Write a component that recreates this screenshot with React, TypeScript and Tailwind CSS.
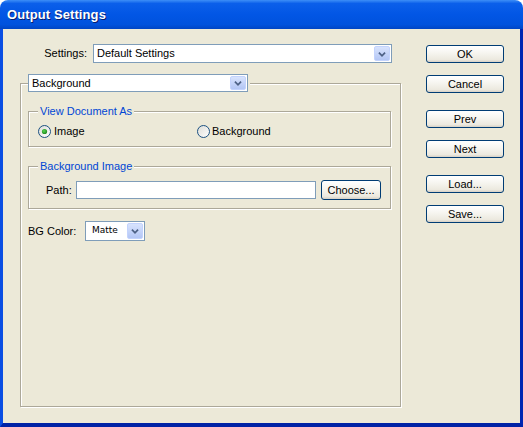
import React from "react";

const font = { fontFamily: '"Liberation Sans", Arial, sans-serif' };

function Chevron() {
  return (
    <svg width="16" height="16" viewBox="0 0 16 16">
      <path d="M4.5 6.5 L8 10 L11.5 6.5" fill="none" stroke="#4d6185" strokeWidth="2" />
    </svg>
  );
}

function Select({ value, width, height, small }: { value: string; width: string; height: string; small?: boolean }) {
  return (
    <div className={`shrink-0 flex items-stretch border border-[#7f9db9] bg-white ${width} ${height}`}>
      <div
        className={`flex-1 min-w-0 flex items-center text-black ${small ? "text-[9px] pl-[6px]" : "text-[11px] pl-[3px]"}`}
        style={small ? { fontFamily: '"DejaVu Sans", sans-serif' } : undefined}
      >
        {value}
      </div>
      <div className="shrink-0 m-[1px] ml-0 w-[16px] flex items-center justify-center rounded-[2px] border border-[#c3d3fd] bg-[linear-gradient(180deg,#d8e3fd,#b3c6f5)]">
        <Chevron />
      </div>
    </div>
  );
}

function Button({ label, className = "" }: { label: string; className?: string }) {
  return (
    <button
      className={`shrink-0 flex items-center justify-center rounded-[3px] border border-[#003c74] bg-[linear-gradient(180deg,#ffffff_0%,#f7f6f1_40%,#ece9df_85%,#d6d0c5_100%)] text-[11px] font-normal text-black ${className}`}
    >
      {label}
    </button>
  );
}

function Radio({ checked }: { checked?: boolean }) {
  return (
    <svg width="13" height="13" viewBox="0 0 13 13" className="shrink-0">
      <defs>
        <linearGradient id="rg" x1="0" y1="0" x2="1" y2="1">
          <stop offset="0" stopColor="#dcdcd6" />
          <stop offset="1" stopColor="#ffffff" />
        </linearGradient>
        <radialGradient id="dot" cx="0.4" cy="0.4" r="0.6">
          <stop offset="0" stopColor="#55d651" />
          <stop offset="1" stopColor="#218a1f" />
        </radialGradient>
      </defs>
      <circle cx="6.5" cy="6.5" r="6" fill="url(#rg)" stroke="#1c5180" strokeWidth="1" />
      {checked && <circle cx="6.5" cy="6.5" r="2.6" fill="url(#dot)" />}
    </svg>
  );
}

const etched = "border border-[#aca899] shadow-[inset_1px_1px_0_#ffffff,1px_1px_0_#ffffff]";

export default function App() {
  return (
    <div className="w-[523px] h-[427px] flex flex-col rounded-t-[8px] overflow-hidden bg-white" style={font}>
      <div className="h-[29px] flex items-center pl-[7px] bg-[linear-gradient(180deg,#3d8ef7_0%,#0b5fea_12%,#0256e5_50%,#0052dd_85%,#0045c4_100%)]">
        <span className="text-[13px] font-bold text-white [text-shadow:1px_1px_0_#0a1e6e] tracking-[0.1px]">
          Output Settings
        </span>
      </div>
      <div className="flex-1 flex bg-[#ece9d8] border-l-[3px] border-l-[#0a4ee3] border-r-[3px] border-r-[#0025b2] border-b-[4px] border-b-[#0022a6] text-[11px] text-black">
        <div className="shrink-0 pl-[17px] pt-[15px] w-[398px]">
          <div className="flex items-center h-[19px]">
            <div className="shrink-0 w-[73px] pr-[6px] text-right">Settings:</div>
            <Select value="Default Settings" width="w-[299px]" height="h-[19px]" />
          </div>

          <fieldset className={`mt-[11px] w-[381px] h-[333px] pl-[7px] ${etched}`}>
            <legend className="bg-[#ece9d8] pr-[2px]">
              <Select value="Background" width="w-[220px]" height="h-[18px]" />
            </legend>

            <fieldset className={`mt-[12px] w-[363px] h-[43px] pl-[9px] ${etched}`}>
              <legend className="px-[2px] leading-[14px] bg-[#ece9d8] text-[#0046d5]">View Document As</legend>
              <div className="mt-[7px] flex items-center h-[13px]">
                <div className="shrink-0 w-[159px] flex items-center gap-[3px]">
                  <Radio checked />
                  <span>Image</span>
                </div>
                <div className="flex items-center gap-[2px]">
                  <Radio />
                  <span>Background</span>
                </div>
              </div>
            </fieldset>

            <fieldset className={`mt-[12px] w-[363px] h-[50px] pl-[9px] ${etched}`}>
              <legend className="px-[2px] leading-[14px] bg-[#ece9d8] text-[#0046d5]">Background Image</legend>
              <div className="mt-[7px] ml-[8px] flex items-center h-[20px]">
                <span className="shrink-0 w-[30px]">Path:</span>
                <div className="shrink-0 w-[240px] h-[18px] border border-[#7f9db9] bg-white" />
                <Button label="Choose..." className="ml-[5px] w-[60px] h-[20px]" />
              </div>
            </fieldset>

            <div className="mt-[12px] flex items-center h-[20px]">
              <div className="shrink-0 w-[57px] min-w-[57px]">BG Color:</div>
              <Select value="Matte" width="w-[60px]" height="h-[20px]" small />
            </div>
          </fieldset>
        </div>

        <div className="ml-[25px] pt-[16px] flex flex-col w-[78px]">
          <Button label="OK" className="h-[18px]" />
          <Button label="Cancel" className="mt-[12px] h-[18px]" />
          <Button label="Prev" className="mt-[17px] h-[18px]" />
          <Button label="Next" className="mt-[12px] h-[18px]" />
          <Button label="Load..." className="mt-[17px] h-[18px]" />
          <Button label="Save..." className="mt-[12px] h-[18px]" />
        </div>
      </div>
    </div>
  );
}
